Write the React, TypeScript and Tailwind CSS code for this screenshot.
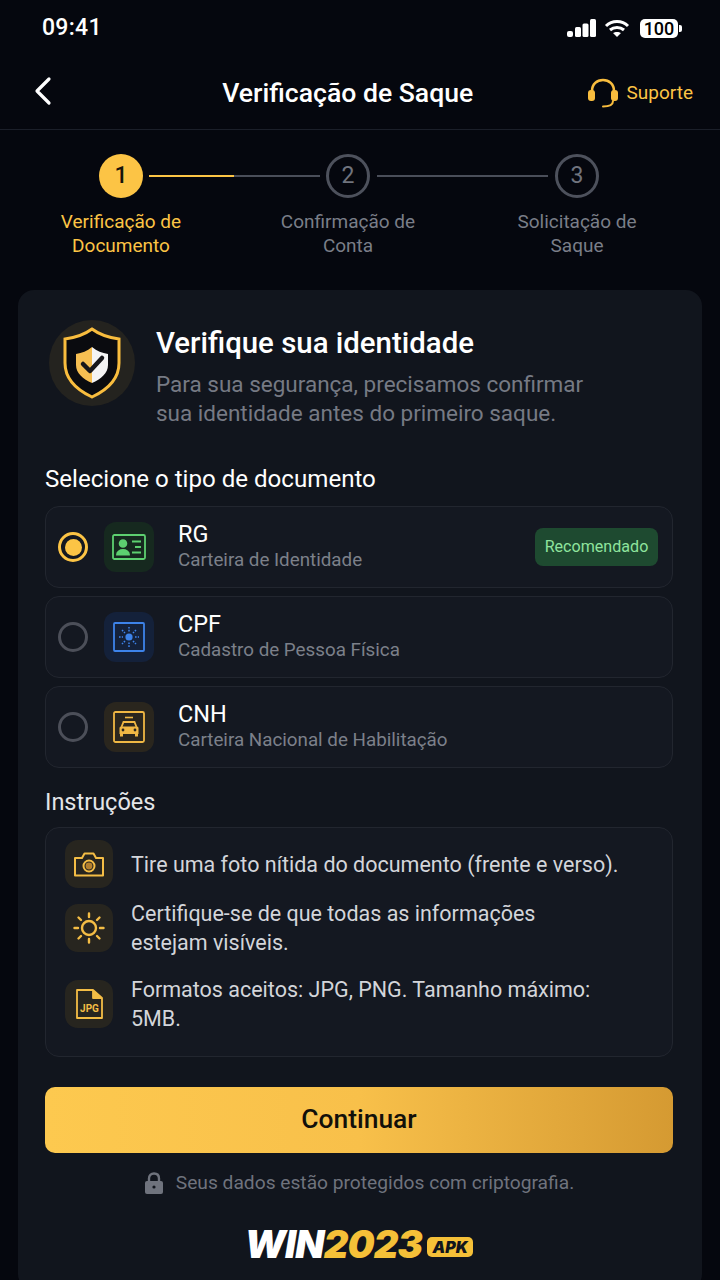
import type { ReactNode } from 'react';

const steps = [
  { n: 1, lines: ['Verificação de', 'Documento'] },
  { n: 2, lines: ['Confirmação de', 'Conta'] },
  { n: 3, lines: ['Solicitação de', 'Saque'] },
];

function StatusBar() {
  return (
    <div className="flex h-[56px] items-center justify-between pl-[42px] pr-[38px] pt-[1px]">
      <span className="text-[23px] font-medium tracking-[0.3px] text-white">09:41</span>
      <div className="flex items-center gap-[8px]">
        <svg width="29" height="19" viewBox="0 0 29 19" fill="white">
          <rect x="0" y="12" width="6" height="6" rx="2" />
          <rect x="8" y="8" width="6" height="10" rx="1.5" />
          <rect x="15.5" y="4.5" width="6" height="13.5" rx="1.5" />
          <rect x="23" y="0" width="6" height="18" rx="1.5" />
        </svg>
        <svg width="26" height="19" viewBox="0 0 25 19" fill="none" stroke="white" strokeWidth="3">
          <path d="M1.5 7 C7.5 1 17.5 1 23.5 7" />
          <path d="M5.5 11 C9.5 7.5 15.5 7.5 19.5 11" />
          <path d="M12.5 18 L8.5 14 C10.5 12.5 14.5 12.5 16.5 14 Z" fill="white" stroke="none" />
        </svg>
        <div className="ml-[2px] flex items-center">
          <div className="flex h-[19px] w-[38px] items-center justify-center rounded-[5px] bg-white text-[18px] font-medium leading-none text-black">100</div>
          <div className="ml-[1px] h-[7px] w-[3px] rounded-r-[2px] bg-white" />
        </div>
      </div>
    </div>
  );
}

function Header() {
  return (
    <div className="flex h-[74px] items-center justify-between border-b border-[#1b1f29] pl-[32px] pr-[27px]">
      <svg className="-mt-[3px]" width="24" height="30" viewBox="0 0 24 30" fill="none" stroke="white" strokeWidth="3.2" strokeLinecap="round" strokeLinejoin="round">
        <path d="M17 3 L5 15 L17 27" />
      </svg>
      <span className="ml-[53px] text-[26.6px] font-medium text-white">Verificação de Saque</span>
      <div className="flex items-center gap-[8px]">
        <svg width="32" height="32" viewBox="0 0 32 32" fill="none">
          <path d="M5 17 V14 C5 7 10 3 16 3 C22 3 27 7 27 14 V17" stroke="#f9bd3e" strokeWidth="2.6" />
          <rect x="1" y="13" width="7" height="11" rx="3" fill="#f9bd3e" />
          <rect x="24" y="13" width="7" height="11" rx="3" fill="#f9bd3e" />
          <path d="M26 24 C26 28 22 29.5 16 29.5" stroke="#f9bd3e" strokeWidth="2" strokeLinecap="round" />
        </svg>
        <span className="mt-[1px] text-[19px] text-[#fcc445]">Suporte</span>
      </div>
    </div>
  );
}

function Stepper() {
  return (
    <div className="h-[160px] pt-[24px]">
      <div className="flex items-center pl-[99px]">
        <div className="flex h-[44px] w-[44px] items-center justify-center rounded-full bg-[#fcc445] text-[23px] font-medium text-[#16130a]">1</div>
        <div className="ml-[6px] flex h-[2px] w-[171px]">
          <div className="h-full w-[85px] bg-[#fcc445]" />
          <div className="h-full flex-1 bg-[#4a4e59]" />
        </div>
        <div className="ml-[6px] flex h-[44px] w-[44px] items-center justify-center rounded-full border-[3px] border-[#4d515c] text-[23px] text-[#70747e]">2</div>
        <div className="ml-[7px] h-[2px] w-[171px] bg-[#4a4e59]" />
        <div className="ml-[7px] flex h-[44px] w-[44px] items-center justify-center rounded-full border-[3px] border-[#4d515c] text-[23px] text-[#70747e]">3</div>
      </div>
      <div className="mt-[12px] flex pl-[31px]">
        {steps.map((s, i) => (
          <div key={s.n} className={`w-[180px] text-center text-[19px] leading-[24px] ${i === 0 ? 'text-[#fcc445]' : 'text-[#7a7e88]'} ${i === 1 ? 'ml-[47px]' : ''} ${i === 2 ? 'ml-[49px]' : ''}`}>
            {s.lines.map((l) => (
              <div key={l}>{l}</div>
            ))}
          </div>
        ))}
      </div>
    </div>
  );
}

function ShieldBadge() {
  return (
    <div className="flex h-[86px] w-[86px] shrink-0 items-center justify-center rounded-full bg-[#24231f]">
      <svg width="60" height="72" viewBox="0 0 60 72" fill="none">
        <path d="M30 2 C38 8 46 10.5 57 12 V36 C57 52 45 63 30 70 C15 63 3 52 3 36 V12 C14 10.5 22 8 30 2 Z" fill="#0a0b0f" stroke="#f9bd3e" strokeWidth="3" />
        <path d="M30 20 C25 24 20 26 14 27 V38 C14 46 21 52 30 56 Z" fill="#f6bf52" />
        <path d="M30 20 C35 24 40 26 46 27 V38 C46 46 39 52 30 56 Z" fill="#f4f4f4" />
        <path d="M21 37 L28 44 L40 31" stroke="#16161a" strokeWidth="4.5" strokeLinecap="round" strokeLinejoin="round" />
      </svg>
    </div>
  );
}

function Radio({ on }: { on: boolean }) {
  return on ? (
    <div className="flex h-[30px] w-[30px] shrink-0 items-center justify-center rounded-full border-[3px] border-[#fcc445]">
      <div className="h-[17px] w-[17px] rounded-full bg-[#fcc445]" />
    </div>
  ) : (
    <div className="h-[30px] w-[30px] shrink-0 rounded-full border-[3px] border-[#4c4f59]" />
  );
}

function IdIcon() {
  return (
    <svg width="34" height="26" viewBox="0 0 34 26" fill="none" stroke="#5dd070" strokeWidth="1.8">
      <rect x="1" y="1" width="32" height="24" rx="1.5" />
      <circle cx="11" cy="9.5" r="3.4" fill="#5dd070" />
      <path d="M5 20.5 C5 14.5 17 14.5 17 20.5 Z" fill="#5dd070" />
      <path d="M20 7.5 H29 M23 13 H29 M20 18.5 H29" strokeWidth="2.2" />
    </svg>
  );
}

function ChipIcon() {
  return (
    <svg width="32" height="30" viewBox="0 0 32 30" fill="none" stroke="#3d83ea" strokeWidth="1.8">
      <rect x="1" y="1" width="30" height="28" rx="1" />
      <circle cx="16" cy="15" r="3.6" fill="#3d83ea" stroke="none" />
      <path d="M16 5 V9.5 M16 20.5 V25 M6 15 H10 M22 15 H26 M9 8 L12 11 M20 19 L23 22 M23 8 L20 11 M12 19 L9 22" strokeWidth="1.5" strokeDasharray="1.6 1.2" />
    </svg>
  );
}

function CarIcon() {
  return (
    <svg width="32" height="32" viewBox="0 0 32 32" fill="none" stroke="#f0b844" strokeWidth="1.8">
      <rect x="1" y="1" width="30" height="30" rx="1.5" />
      <path d="M12 6.5 H20" strokeWidth="1.6" />
      <path d="M8.5 16 L10.5 11 H21.5 L23.5 16" />
      <path d="M6.5 17 Q6.5 15.5 8 15.5 H24 Q25.5 15.5 25.5 17 V23 H6.5 Z" fill="#f0b844" stroke="none" />
      <path d="M8.5 23 V25.5 M23.5 23 V25.5" strokeWidth="3" />
      <circle cx="10" cy="19" r="1.4" fill="#2a2620" stroke="none" />
      <circle cx="22" cy="19" r="1.4" fill="#2a2620" stroke="none" />
    </svg>
  );
}

const documents: { code: string; name: string; tile: string; icon: ReactNode; selected?: boolean }[] = [
  { code: 'RG', name: 'Carteira de Identidade', tile: 'bg-[#16291f]', icon: <IdIcon />, selected: true },
  { code: 'CPF', name: 'Cadastro de Pessoa Física', tile: 'bg-[#14213a]', icon: <ChipIcon /> },
  { code: 'CNH', name: 'Carteira Nacional de Habilitação', tile: 'bg-[#2a261e]', icon: <CarIcon /> },
];

function DocRow({ doc }: { doc: (typeof documents)[number] }) {
  return (
    <div className="flex h-[82px] items-center rounded-[14px] border border-[#22262f] bg-[#141821] pl-[12px] pr-[14px]">
      <Radio on={!!doc.selected} />
      <div className={`ml-[16px] flex h-[50px] w-[50px] items-center justify-center rounded-[12px] ${doc.tile}`}>{doc.icon}</div>
      <div className="ml-[24px] flex-1">
        <div className="text-[23.5px] leading-[27px] text-white">{doc.code}</div>
        <div className="text-[18.8px] leading-[25px] text-[#7c808a]">{doc.name}</div>
      </div>
      {doc.selected && (
        <div className="flex h-[38px] w-[123px] items-center justify-center rounded-[8px] bg-[#1e4a30] text-[16.1px] text-[#8fe49d]">Recomendado</div>
      )}
    </div>
  );
}

function CameraIcon() {
  return (
    <svg width="30" height="25" viewBox="0 0 30 25" fill="none" stroke="#f4bd45" strokeWidth="2">
      <path d="M1 6 H8 L10.5 1.5 H19.5 L22 6 H29 V23.5 H1 Z" strokeLinejoin="round" />
      <circle cx="15" cy="14" r="5.5" />
      <circle cx="15" cy="14" r="3.4" fill="#b3802f" stroke="none" />
    </svg>
  );
}

function SunIcon() {
  return (
    <svg width="32" height="32" viewBox="0 0 32 32" fill="none" stroke="#f4bd45" strokeWidth="2.4" strokeLinecap="round">
      <circle cx="16" cy="16" r="7" />
      <path d="M16 1.5 V5 M16 27 V30.5 M1.5 16 H5 M27 16 H30.5 M5.5 5.5 L8 8 M24 24 L26.5 26.5 M26.5 5.5 L24 8 M8 24 L5.5 26.5" />
    </svg>
  );
}

function JpgIcon() {
  return (
    <svg width="27" height="30" viewBox="0 0 27 30" fill="none" stroke="#f4bd45" strokeWidth="1.8" strokeLinejoin="round">
      <path d="M1 1 H17 L26 9 V29 H1 Z" />
      <path d="M17 1 V9 H26" fill="#f4bd45" />
      <text x="13.5" y="22.5" textAnchor="middle" fill="#f4bd45" stroke="none" fontSize="10" fontWeight="700" fontFamily="Roboto, sans-serif">JPG</text>
    </svg>
  );
}

const instructions: { icon: ReactNode; text: string[]; box: string }[] = [
  { icon: <CameraIcon />, text: ['Tire uma foto nítida do documento (frente e verso).'], box: 'h-[38px]' },
  { icon: <SunIcon />, text: ['Certifique-se de que todas as informações', 'estejam visíveis.'], box: 'mt-[16px] h-[58px]' },
  { icon: <JpgIcon />, text: ['Formatos aceitos: JPG, PNG. Tamanho máximo:', '5MB.'], box: 'mt-[18px] h-[58px]' },
];

function App() {
  return (
    <div className="h-[1280px] w-[720px] overflow-hidden bg-[#05070e] font-['Roboto',sans-serif]">
      <StatusBar />
      <Header />
      <Stepper />
      <div className="mx-[18px] h-[1000px] rounded-[16px] bg-[#11151d] pl-[27px] pr-[29px] pt-[30px]">
        <div className="flex">
          <div className="ml-[4px]">
            <ShieldBadge />
          </div>
          <div className="ml-[21px]">
            <div className="text-[29.4px] font-medium leading-[46px] text-white">Verifique sua identidade</div>
            <div className="mt-[4px] text-[22.5px] leading-[29px] text-[#767a84]">
              <div>Para sua segurança, precisamos confirmar</div>
              <div>sua identidade antes do primeiro saque.</div>
            </div>
          </div>
        </div>
        <div className="mt-[36px] text-[24.1px] leading-[30px] text-white">Selecione o tipo de documento</div>
        <div className="mt-[12px] flex flex-col gap-[8px]">
          {documents.map((d) => (
            <DocRow key={d.code} doc={d} />
          ))}
        </div>
        <div className="mt-[19px] text-[23.5px] leading-[30px] text-[#e4e5e8]">Instruções</div>
        <div className="mt-[10px] h-[230px] rounded-[14px] border border-[#22262f] bg-[#141821] pl-[19px] pt-[17px]">
          {instructions.map((item) => (
            <div key={item.text[0]} className={`flex items-center ${item.box}`}>
              <div className="flex h-[48px] w-[48px] shrink-0 items-center justify-center rounded-[13px] bg-[#27251f]">{item.icon}</div>
              <div className="ml-[18px] text-[21.5px] leading-[29px] text-[#d3d5da]">
                {item.text.map((t) => (
                  <div key={t}>{t}</div>
                ))}
              </div>
            </div>
          ))}
        </div>
        <button className="mt-[30px] flex h-[66px] w-full items-center justify-center rounded-[10px] bg-gradient-to-r from-[#fdc94f] via-[#f8c04a] to-[#d59a32] text-[26.4px] font-medium text-[#12100a]">
          Continuar
        </button>
        <div className="mt-[16px] flex items-center justify-center gap-[12px] text-[19.2px] text-[#6f737d]">
          <svg width="20" height="22" viewBox="0 0 20 22" fill="#6f737d">
            <path d="M5 10 V6.5 C5 3.5 7 1.5 10 1.5 C13 1.5 15 3.5 15 6.5 V10" fill="none" stroke="#6f737d" strokeWidth="2.4" />
            <rect x="1" y="9" width="18" height="13" rx="2" />
            <circle cx="10" cy="15" r="1.6" fill="#11151d" />
          </svg>
          <span>Seus dados estão protegidos com criptografia.</span>
        </div>
        <div className="mt-[26px] flex items-center justify-center font-['Inter',sans-serif]">
          <span className="text-[38px] font-black italic leading-[40px] tracking-[-0.8px] text-white">WIN</span>
          <span className="text-[38px] font-black italic leading-[40px] tracking-[-0.8px] text-[#f5c038]">2023</span>
          <span className="ml-[5px] mt-[6px] flex h-[20px] w-[46px] items-center justify-center rounded-[5px] bg-[#f5c038] text-[16px] font-black italic leading-none text-[#11151d]">APK</span>
        </div>
      </div>
    </div>
  );
}

export default App;
